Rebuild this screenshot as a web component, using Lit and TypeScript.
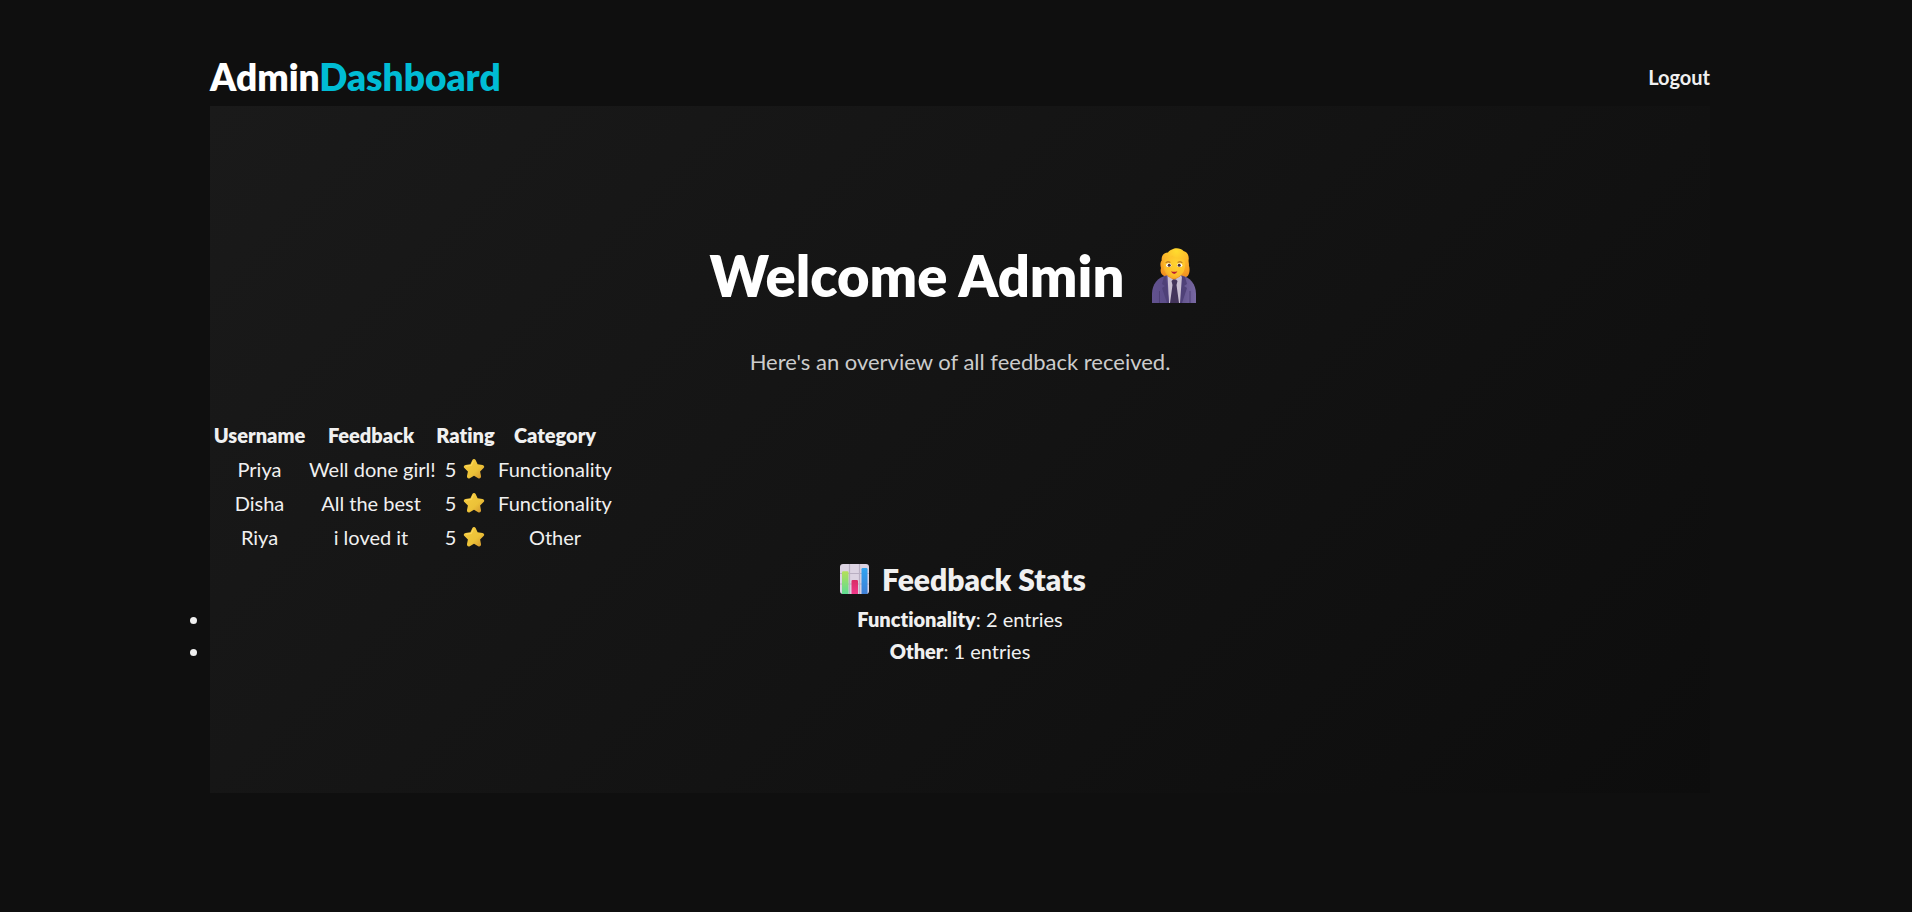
import { LitElement, html, css } from "lit";
import { customElement, property, state } from "lit/decorators.js";

interface Entry {
  username: string;
  feedback: string;
  rating: number;
  category: string;
}

const starIcon = html`
  <svg class="star" viewBox="0 0 24 24" role="img" aria-label="stars">
    <defs>
      <linearGradient id="star-fill" x1="0" y1="0" x2="1" y2="1">
        <stop offset="0" stop-color="#f6cb40" />
        <stop offset="0.6" stop-color="#ecc238" />
        <stop offset="1" stop-color="#d0902c" />
      </linearGradient>
    </defs>
    <path
      d="M10.400 3.100c.6-1.500 2.600-1.500 3.200 0l2 4.200 4.900.6c1.700.2 2.300 2.100 1.100 3.200l-3.500 3.300.9 4.700c.3 1.800-1.300 2.900-2.800 2.100L12 18.800l-4.200 2.400c-1.500.8-3.100-.3-2.800-2.100l.9-4.700-3.500-3.300c-1.200-1.100-.6-3 1.100-3.200l4.900-.6z"
      fill="url(#star-fill)"
    />
    <path d="M11.300 4.200L9.300 8.500l-4.900.6" fill="none" stroke="#ffdc62" stroke-width=".9" stroke-linecap="round" />
  </svg>
`;

const chartIcon = html`
  <svg class="chart" viewBox="0 0 40 32" aria-hidden="true">
    <defs>
      <linearGradient id="bar-green" x1="0" y1="0" x2="0" y2="1">
        <stop offset="0" stop-color="#b4e05a" />
        <stop offset="1" stop-color="#5fdc92" />
      </linearGradient>
      <linearGradient id="bar-pink" x1="0" y1="0" x2="0" y2="1">
        <stop offset="0" stop-color="#d92b66" />
        <stop offset="1" stop-color="#f0388a" />
      </linearGradient>
      <linearGradient id="bar-blue" x1="0" y1="0" x2="0" y2="1">
        <stop offset="0" stop-color="#30a4f0" />
        <stop offset="1" stop-color="#3f7fd6" />
      </linearGradient>
    </defs>
    <rect x="6" y="1" width="29" height="30" rx="3" fill="#dcd3e2" />
    <path d="M6 10.500h29M6 21h29M15.500 1v30M25.500 1v30" stroke="#b9afc2" stroke-width="1.200" />
    <path d="M8 31V9.500a1.200 1.200 0 0 1 1.200-1.200h4.100a1.200 1.200 0 0 1 1.200 1.200V31z" fill="url(#bar-green)" />
    <path d="M17.500 31V18.200a1.200 1.200 0 0 1 1.200-1.200h4.100a1.200 1.200 0 0 1 1.200 1.200V31z" fill="url(#bar-pink)" />
    <path d="M27.500 31V6.200A1.200 1.200 0 0 1 28.700 5h3.600A1.200 1.200 0 0 1 33.500 6.200V31z" fill="url(#bar-blue)" />
  </svg>
`;

const adminIcon = html`
  <svg class="person" viewBox="0 0 70 56" aria-hidden="true">
    <defs>
      <radialGradient id="hair" cx=".55" cy=".1" r=".95">
        <stop offset="0" stop-color="#ffdc2e" />
        <stop offset=".5" stop-color="#fcb52a" />
        <stop offset="1" stop-color="#f08a1e" />
      </radialGradient>
      <radialGradient id="face" cx=".6" cy=".35" r=".8">
        <stop offset="0" stop-color="#ffd52f" />
        <stop offset=".65" stop-color="#fdbd2a" />
        <stop offset="1" stop-color="#ee9626" />
      </radialGradient>
      <linearGradient id="coat" x1="0" y1="0" x2="1" y2="0">
        <stop offset="0" stop-color="#62528f" />
        <stop offset=".5" stop-color="#584a84" />
        <stop offset="1" stop-color="#7868a2" />
      </linearGradient>
    </defs>
    <path
      d="M32 1.500C35-.6 41-.2 43.500 3c4 1 5.800 5 5.100 9-.2 2 .6 3 .3 5.500 1.200 3.500.8 8-1.200 10.500-3 2.500-7 2.800-11 2.800s-9-.2-11-2.400c-5-1.200-5.700-5-4.700-8.400-1-3-.7-6 .7-7.500-.6-4.500 2-8 6.300-8 .8-1.500 2.200-2.500 4-3z"
      fill="url(#hair)"
    />
    <path
      d="M12 55V46c0-10 6-16.500 14-18.500h16c8 2 14 8.500 14 18.500v9z"
      fill="url(#coat)"
    />
    <path d="M27.500 27.500 34 31l7-3.500 2 4L41 55H29z" fill="#c9bfd2" />
    <path d="M28 24h12v4.500L34 32l-6-3.500z" fill="#e88c22" />
    <path d="M31.500 33 33 31.500h3L37.500 33 36.500 37l2.500 18h-9l2.500-18z" fill="#43345b" />
    <path d="m26 28 3 27h-2l-5-15 3-2-3-2 2-7zM42 28l-2 27h2l5-15-3-2 3-2-2-7z" fill="#4f4178" />
    <path d="M19.500 43v12M50 43v12" stroke="#4e4077" stroke-width="1" />
    <path
      d="M24 12c3-.2 6-2 8-4.500C35 10 39 11 44 11.500c1.800 3 1.500 8-.5 12.500C41 28 37 30.500 34 30.500S27 28 25 24c-2-4-2.200-8.500-1-12z"
      fill="url(#face)"
    />
    <path d="M26 14.300q2-1.200 4-.2M38 14.100q2-1 4 .2" fill="none" stroke="#9f5b1e" stroke-width=".9" stroke-linecap="round" />
    <ellipse cx="28.700" cy="17.200" rx="2.600" ry="1.900" fill="#fff" />
    <ellipse cx="39.700" cy="17.200" rx="2.600" ry="1.900" fill="#fff" />
    <circle cx="29.200" cy="17.200" r="1.500" fill="#4a2d35" />
    <circle cx="39.200" cy="17.200" r="1.500" fill="#4a2d35" />
    <path d="M31 23.300q3.200 1 6.400 0-1.200 2.700-3.200 2.700t-3.200-2.700z" fill="#b81e36" />
  </svg>
`;

@customElement("feedback-table")
export class FeedbackTable extends LitElement {
  @property({ attribute: false }) entries: Entry[] = [];

  static styles = css`
    :host {
      display: block;
    }
    .table {
      border-spacing: 2px;
      table-layout: fixed;
      width: 404px;
      text-align: center;
    }
    .name {
      width: 95px;
    }
    .text {
      width: 124px;
    }
    .score {
      width: 61px;
    }
    .heading,
    .cell {
      padding: 0;
      white-space: nowrap;
    }
    .heading {
      font-weight: 800;
    }
    .rating {
      display: flex;
      align-items: center;
      justify-content: center;
      gap: 6px;
    }
    .star {
      width: 24px;
      height: 24px;
    }
  `;

  render() {
    return html`
      <table class="table">
        <colgroup>
          <col class="name" />
          <col class="text" />
          <col class="score" />
          <col />
        </colgroup>
        <thead>
          <tr>
            ${["Username", "Feedback", "Rating", "Category"].map(
              (title) => html`<th class="heading" scope="col">${title}</th>`
            )}
          </tr>
        </thead>
        <tbody>
          ${this.entries.map(
            (entry) => html`
              <tr>
                <td class="cell">${entry.username}</td>
                <td class="cell">${entry.feedback}</td>
                <td class="cell"><span class="rating">${entry.rating}${starIcon}</span></td>
                <td class="cell">${entry.category}</td>
              </tr>
            `
          )}
        </tbody>
      </table>
    `;
  }
}

@customElement("app-root")
export class AppRoot extends LitElement {
  @state() private entries: Entry[] = [
    { username: "Priya", feedback: "Well done girl!", rating: 5, category: "Functionality" },
    { username: "Disha", feedback: "All the best", rating: 5, category: "Functionality" },
    { username: "Riya", feedback: "i loved it", rating: 5, category: "Other" },
  ];

  static styles = css`
    :host {
      display: block;
      box-sizing: border-box;
      min-height: 100vh;
      padding: 48px 32px 48px 40px;
      background: #0f0f0f;
      color: #f0f0f0;
      font: 20px/32px Lato, "Open Sans", sans-serif;
      font-variant-ligatures: none;
    }
    .page {
      max-width: 1500px;
      margin: 0 auto;
    }
    .header {
      display: flex;
      align-items: center;
      justify-content: space-between;
    }
    .logo {
      color: #fff;
      font-size: 37px;
      font-weight: 800;
      line-height: 58px;
    }
    .accent {
      color: #00bcd4;
    }
    .logout {
      color: inherit;
      font-weight: 700;
      text-decoration: none;
    }
    .panel {
      padding: 130px 0 126px;
      background: linear-gradient(135deg, #1a1a1a, #0d0d0d);
      text-align: center;
    }
    .title {
      display: flex;
      align-items: center;
      justify-content: center;
      gap: 16px;
      margin: 0 0 28px;
      color: #fff;
      font-size: 56px;
      font-weight: 800;
      line-height: 80px;
    }
    .person {
      width: 70px;
      height: 56px;
    }
    .intro {
      margin: 0 0 38px;
      color: #ccc;
      font-size: 22px;
      line-height: 35px;
    }
    .stats-title {
      display: flex;
      align-items: center;
      justify-content: center;
      gap: 8px;
      margin: 0;
      font-size: 30px;
      font-weight: 800;
      line-height: 48px;
    }
    .chart {
      width: 40px;
      height: 32px;
    }
    .stats {
      margin: 0;
      padding: 0;
    }
    .category {
      font-weight: 800;
    }
  `;

  private get stats(): [string, number][] {
    const counts = new Map<string, number>();
    for (const { category } of this.entries) {
      counts.set(category, (counts.get(category) ?? 0) + 1);
    }
    return [...counts];
  }

  render() {
    return html`
      <div class="page">
        <header class="header">
          <div class="logo">Admin<span class="accent">Dashboard</span></div>
          <nav><a class="logout" href="#logout">Logout</a></nav>
        </header>
        <main class="panel">
          <h1 class="title">Welcome Admin ${adminIcon}</h1>
          <p class="intro">Here's an overview of all feedback received.</p>
          <feedback-table .entries=${this.entries}></feedback-table>
          <h2 class="stats-title">${chartIcon} Feedback Stats</h2>
          <ul class="stats">
            ${this.stats.map(
              ([category, count]) =>
                html`<li><strong class="category">${category}</strong>: ${count} entries</li>`
            )}
          </ul>
        </main>
      </div>
    `;
  }
}
